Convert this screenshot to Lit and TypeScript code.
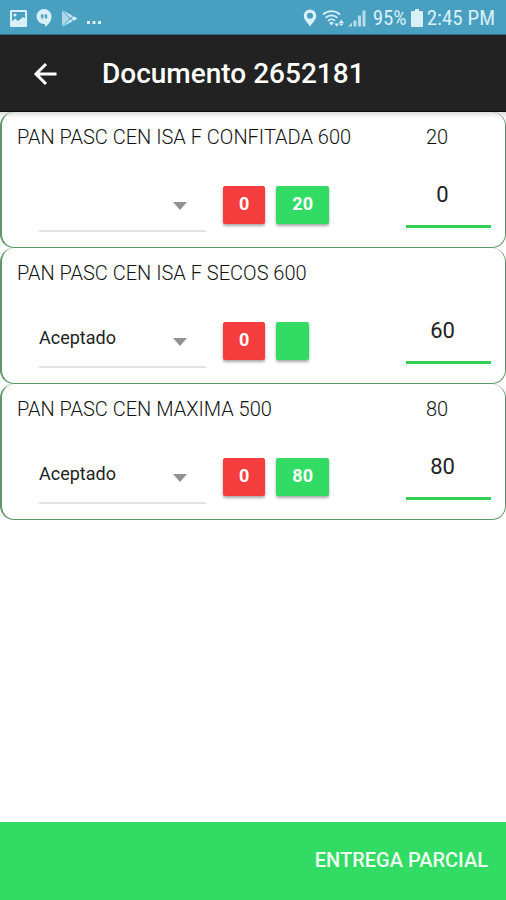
import { LitElement, html, css, nothing } from "lit";
import { customElement, property } from "lit/decorators.js";

interface Item {
  name: string;
  ordered: string;
  status: string;
  rejected: string;
  accepted: string;
  delivered: string;
}

const ITEMS: Item[] = [
  { name: "PAN PASC CEN ISA F CONFITADA 600", ordered: "20", status: "", rejected: "0", accepted: "20", delivered: "0" },
  { name: "PAN PASC CEN ISA F SECOS 600", ordered: "", status: "Aceptado", rejected: "0", accepted: "", delivered: "60" },
  { name: "PAN PASC CEN MAXIMA 500", ordered: "80", status: "Aceptado", rejected: "0", accepted: "80", delivered: "80" },
];

@customElement("status-bar")
class StatusBar extends LitElement {
  static styles = css`
    :host {
      display: flex;
      align-items: center;
      justify-content: space-between;
      box-sizing: border-box;
      height: 35px;
      padding: 2px 11px 0 10px;
      background: #489fc0;
      border-bottom: 1px solid #326f87;
      color: #d9f0f8;
      font-size: 21px;
      line-height: 24px;
      font-family: "Roboto Condensed", Roboto, sans-serif;
    }
    .group {
      display: flex;
      align-items: center;
    }
    .notices {
      gap: 9px;
    }
    .system {
      gap: 4px;
    }
    svg {
      display: block;
      fill: currentColor;
    }
    .dots {
      align-self: flex-end;
    }
  `;

  render() {
    return html`
      <div class="group notices">
        <svg width="17" height="17" viewBox="0 0 17 17" aria-hidden="true">
          <path fill-rule="evenodd" d="M1 0h15a1 1 0 0 1 1 1v15a1 1 0 0 1-1 1H1a1 1 0 0 1-1-1V1a1 1 0 0 1 1-1zM2 2v9.500l3-3 3 2.500 5-4 2 1.500V2z" />
          <circle cx="5" cy="5" r="1.600" />
        </svg>
        <svg width="16" height="18" viewBox="0 0 16 18" aria-hidden="true">
          <path fill-rule="evenodd" d="M8 0a7.500 7.500 0 0 1 7.500 7.500c0 4.500-3 8-6.500 10.500V15H8A7.500 7.500 0 0 1 8 0zM4.800 5.500v3h1.300L5.500 10h1l.9-1.500v-3zM8.600 5.500v3h1.300L9.300 10h1l.9-1.500v-3z" />
        </svg>
        <svg width="17" height="17" viewBox="0 0 17 17" aria-hidden="true">
          <path opacity=".7" d="M1 .5v16l7.500-8z" />
          <path opacity=".85" d="M1.500 .3 12 6 9.300 8zM1.500 16.700 12 11 9.300 9z" />
          <path d="M12.800 6.300 16.500 8.500l-3.700 2.200L10.300 8.500z" />
        </svg>
        <svg class="dots" width="16" height="9" viewBox="0 0 16 9" aria-hidden="true">
          <path d="M0 3h3v3H0zM5.500 3h3v3h-3zM11 3h3v3h-3z" />
        </svg>
      </div>
      <div class="group system">
        <svg width="14" height="18" viewBox="0 0 14 18" aria-hidden="true">
          <path fill-rule="evenodd" d="M7 .5a6.300 6.300 0 0 1 6.300 6.300c0 4-4.300 7.700-6.300 10.700C5 14.500.7 10.800.7 6.800A6.300 6.300 0 0 1 7 .5zm0 3.300a3 3 0 1 0 0 6 3 3 0 0 0 0-6z" />
        </svg>
        <svg width="48" height="18" viewBox="0 0 48 18" aria-hidden="true">
          <g fill="none" stroke="currentColor" stroke-width="1.800">
            <path d="M2 5.500a12.500 12.500 0 0 1 17 0M4.500 8.800a8.500 8.500 0 0 1 12 0M7 11.800a5 5 0 0 1 7 0" />
          </g>
          <path d="M8.300 14a3 3 0 0 1 4.400 0l-2.200 2.600zM13.500 14.500h4.600l-2.300 3.300zM17.800 14h5l-2.500-3.600zM17.800 14.500h5L20.300 17z" />
          <path opacity=".75" d="M27 17.500l4-4v4zM32.500 17.500v-6h3v6z" />
          <path opacity=".75" d="M37 17.500V6.500h3v11zM41.500 17.500V1.500h3v16z" />
        </svg>
        <span>95%</span>
        <svg width="12" height="18" viewBox="0 0 12 18" aria-hidden="true">
          <path d="M4 0h4v2h3a1 1 0 0 1 1 1v14a1 1 0 0 1-1 1H1a1 1 0 0 1-1-1V3a1 1 0 0 1 1-1h3z" />
        </svg>
        <span>2:45 PM</span>
      </div>
    `;
  }
}

@customElement("delivery-item")
class DeliveryItem extends LitElement {
  @property({ attribute: false }) item!: Item;

  static styles = css`
    :host {
      display: grid;
      grid-template-columns: 1fr 85px;
      grid-template-rows: 48px 84px;
      box-sizing: border-box;
      padding: 2px 14px 1px 15px;
      border: 1px solid #5f9765;
      border-top: 0;
      border-left: 2px solid #5f9765;
      border-radius: 14px;
      color: #111;
    }
    .name,
    .ordered {
      margin: 0;
      padding-top: 11px;
      font-size: 20px;
      line-height: 24px;
      font-weight: 300;
      white-space: nowrap;
    }
    .ordered {
      padding-left: 20px;
    }
    .controls {
      display: flex;
      align-items: flex-start;
    }
    .choice {
      position: relative;
      flex: 0 1 167px;
      min-width: 0;
      margin: 0 17px 0 22px;
    }
    select {
      display: block;
      appearance: none;
      width: 100%;
      height: 70px;
      margin: 0;
      padding: 10px 36px 0 0;
      border: 0;
      border-bottom: 2px solid #e2e2e2;
      border-radius: 0;
      background: transparent;
      color: #222;
      font: inherit;
      font-size: 18px;
    }
    .caret {
      position: absolute;
      right: 19px;
      top: 40px;
      pointer-events: none;
    }
    .pill {
      box-sizing: border-box;
      height: 38px;
      min-width: 33px;
      margin: 24px 11px 0 0;
      padding: 0 16px 4px;
      border: 0;
      border-radius: 2px;
      background: #32db64;
      box-shadow: 0 2px 3px rgba(0, 0, 0, 0.35);
      color: #fff;
      font: inherit;
      font-size: 18px;
      font-weight: 700;
    }
    .rejected {
      background: #f53d3d;
    }
    input {
      box-sizing: border-box;
      width: 100%;
      height: 66px;
      margin: 0;
      padding: 2px 12px 0 0;
      border: 0;
      border-bottom: 3px solid #32cf52;
      border-radius: 0;
      background: transparent;
      color: #222;
      font: inherit;
      font-size: 22px;
      text-align: center;
    }
  `;

  render() {
    const { name, ordered, status, rejected, accepted, delivered } = this.item;
    return html`
      <h2 class="name">${name}</h2>
      <p class="ordered">${ordered || nothing}</p>
      <div class="controls">
        <div class="choice">
          <select aria-label="Estado">
            <option value="" ?selected=${!status}></option>
            <option value="Aceptado" ?selected=${status === "Aceptado"}>Aceptado</option>
          </select>
          <svg class="caret" width="14" height="8" viewBox="0 0 14 8" aria-hidden="true">
            <path d="M0 0h14L7 8z" fill="#929292" />
          </svg>
        </div>
        <button class="pill rejected" aria-label="Rechazados">${rejected}</button>
        <button class="pill" aria-label="Aceptados">${accepted}</button>
      </div>
      <input type="text" inputmode="numeric" aria-label="Cantidad entregada" .value=${delivered} />
    `;
  }
}

@customElement("app-root")
class AppRoot extends LitElement {
  static styles = css`
    :host {
      display: flex;
      flex-direction: column;
      min-height: 100vh;
      background: #fff;
      font-family: Roboto, sans-serif;
    }
    .header {
      display: flex;
      align-items: center;
      gap: 42px;
      box-sizing: border-box;
      height: 77px;
      padding: 2px 30px 0;
      background: #222;
      border-bottom: 1px solid #0c0c0c;
      color: #fff;
    }
    .back {
      display: block;
      padding: 0;
      border: 0;
      background: none;
      color: inherit;
    }
    .back svg {
      display: block;
    }
    h1 {
      margin: 0;
      font-size: 28px;
      line-height: 34px;
      font-weight: 500;
    }
    .list {
      flex: 1;
      background: linear-gradient(#dcdcdc, #fff 6px);
    }
    .footer {
      display: flex;
      align-items: center;
      justify-content: flex-end;
      box-sizing: border-box;
      height: 78px;
      padding: 0 18px 2px;
      background: #32db64;
    }
    .submit {
      padding: 0;
      border: 0;
      background: none;
      color: #f0fff4;
      font: inherit;
      font-size: 20px;
      line-height: 24px;
      font-weight: 500;
    }
  `;

  render() {
    return html`
      <status-bar></status-bar>
      <header class="header">
        <button class="back" aria-label="Volver">
          <svg width="30" height="24" viewBox="0 0 30 24" aria-hidden="true">
            <path d="M16 2 6 12l10 10M6 12h20.500" fill="none" stroke="currentColor" stroke-width="3" />
          </svg>
        </button>
        <h1>Documento 2652181</h1>
      </header>
      <main class="list">
        ${ITEMS.map((item) => html`<delivery-item .item=${item}></delivery-item>`)}
      </main>
      <footer class="footer">
        <button class="submit">ENTREGA PARCIAL</button>
      </footer>
    `;
  }
}
